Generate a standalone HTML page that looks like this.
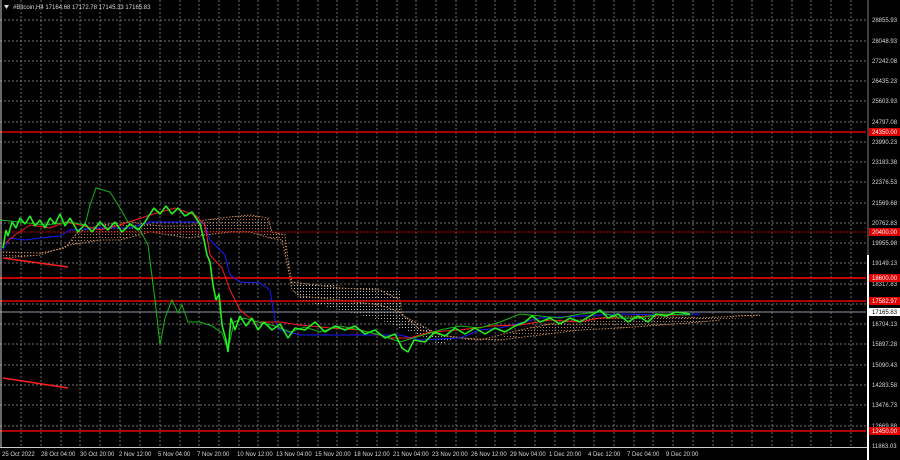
<!DOCTYPE html>
<html><head><meta charset="utf-8"><style>
html,body{margin:0;padding:0;background:#000;width:900px;height:460px;overflow:hidden}
svg{display:block}
text{font-family:"Liberation Sans",sans-serif;font-size:6px;fill:#d8d8d8}
</style></head><body>
<svg width="900" height="460" viewBox="0 0 900 460">
<defs>
<pattern id="wh" width="3" height="3" patternUnits="userSpaceOnUse"><rect width="1" height="1" fill="#bbb"/></pattern>
<pattern id="or" width="3" height="3" patternUnits="userSpaceOnUse"><rect width="1" height="1" fill="#c88a5a"/></pattern>
</defs>
<rect width="900" height="460" fill="#000"/>
<g stroke="#9a9a9a" stroke-width="0.7" stroke-dasharray="2,2">
<line x1="21" y1="0" x2="21" y2="447"/><line x1="41" y1="0" x2="41" y2="447"/><line x1="61" y1="0" x2="61" y2="447"/><line x1="80" y1="0" x2="80" y2="447"/><line x1="100" y1="0" x2="100" y2="447"/><line x1="120" y1="0" x2="120" y2="447"/><line x1="140" y1="0" x2="140" y2="447"/><line x1="160" y1="0" x2="160" y2="447"/><line x1="180" y1="0" x2="180" y2="447"/><line x1="199" y1="0" x2="199" y2="447"/><line x1="219" y1="0" x2="219" y2="447"/><line x1="239" y1="0" x2="239" y2="447"/><line x1="258" y1="0" x2="258" y2="447"/><line x1="278" y1="0" x2="278" y2="447"/><line x1="298" y1="0" x2="298" y2="447"/><line x1="318" y1="0" x2="318" y2="447"/><line x1="337" y1="0" x2="337" y2="447"/><line x1="357" y1="0" x2="357" y2="447"/><line x1="377" y1="0" x2="377" y2="447"/><line x1="397" y1="0" x2="397" y2="447"/><line x1="416" y1="0" x2="416" y2="447"/><line x1="436" y1="0" x2="436" y2="447"/><line x1="456" y1="0" x2="456" y2="447"/><line x1="476" y1="0" x2="476" y2="447"/><line x1="495" y1="0" x2="495" y2="447"/><line x1="515" y1="0" x2="515" y2="447"/><line x1="535" y1="0" x2="535" y2="447"/><line x1="555" y1="0" x2="555" y2="447"/><line x1="574" y1="0" x2="574" y2="447"/><line x1="594" y1="0" x2="594" y2="447"/><line x1="614" y1="0" x2="614" y2="447"/><line x1="634" y1="0" x2="634" y2="447"/><line x1="653" y1="0" x2="653" y2="447"/><line x1="673" y1="0" x2="673" y2="447"/><line x1="693" y1="0" x2="693" y2="447"/><line x1="713" y1="0" x2="713" y2="447"/><line x1="732" y1="0" x2="732" y2="447"/><line x1="752" y1="0" x2="752" y2="447"/><line x1="772" y1="0" x2="772" y2="447"/><line x1="792" y1="0" x2="792" y2="447"/><line x1="811" y1="0" x2="811" y2="447"/><line x1="831" y1="0" x2="831" y2="447"/><line x1="851" y1="0" x2="851" y2="447"/>
<line x1="0" y1="20" x2="866" y2="20"/><line x1="0" y1="41" x2="866" y2="41"/><line x1="0" y1="61" x2="866" y2="61"/><line x1="0" y1="81" x2="866" y2="81"/><line x1="0" y1="101" x2="866" y2="101"/><line x1="0" y1="122" x2="866" y2="122"/><line x1="0" y1="142" x2="866" y2="142"/><line x1="0" y1="162" x2="866" y2="162"/><line x1="0" y1="182" x2="866" y2="182"/><line x1="0" y1="203" x2="866" y2="203"/><line x1="0" y1="223" x2="866" y2="223"/><line x1="0" y1="243" x2="866" y2="243"/><line x1="0" y1="263" x2="866" y2="263"/><line x1="0" y1="284" x2="866" y2="284"/><line x1="0" y1="304" x2="866" y2="304"/><line x1="0" y1="324" x2="866" y2="324"/><line x1="0" y1="344" x2="866" y2="344"/><line x1="0" y1="365" x2="866" y2="365"/><line x1="0" y1="385" x2="866" y2="385"/><line x1="0" y1="405" x2="866" y2="405"/><line x1="0" y1="426" x2="866" y2="426"/>
</g>
<path d="M3,252 L40,253 L65,248 L70,240 L78,232 L100,225 L130,222 L160,226 L190,226 L205,220 L230,217 L250,215 L268,218 L272,232 L285,235 L288,260 L292,282 L300,285 L340,288 L380,290 L400,300 L402,315 L420,325 L440,335 L480,340 L500,338 L520,330 L540,325 L560,322 L580,320 L600,318 L620,316 L660,315 L700,318 L720,317 L740,315 L760,315 L760,317 L720,320 L700,322 L660,325 L620,328 L600,326 L580,330 L560,332 L540,335 L520,336 L500,340 L480,342 L455,338 L440,335 L420,330 L402,318 L400,312 L380,305 L340,300 L300,296 L292,290 L288,268 L282,240 L270,238 L250,232 L230,232 L205,235 L190,238 L150,232 L120,240 L100,240 L70,245 L40,255 L3,258 Z" fill="url(#or)" opacity="0.9"/>
<path d="M290,282 L400,290 L402,315 L420,325 L440,335 L455,338 L440,345 L420,335 L400,328 L380,320 L340,310 L300,300 Z" fill="url(#wh)"/>
<g fill="none" stroke="#c88a5a" stroke-width="1" stroke-dasharray="1.5,1.5">
<path d="M3,252 L40,253 L65,248 L78,232 L100,225 L130,222 L160,226 L190,226 L205,220 L230,217 L250,215 L268,218 L272,232 L285,235 L288,260 L292,282 L340,288 L380,290 L400,300 L402,315 L420,325 L440,335 L480,340 L520,330 L560,322 L620,316 L700,318 L760,315"/>
<path d="M3,258 L40,255 L70,245 L100,240 L120,240 L150,232 L190,238 L205,235 L230,232 L250,232 L270,238 L282,240 L288,268 L292,290 L300,296 L340,300 L380,305 L400,312 L420,330 L455,338 L500,340 L540,335 L580,330 L620,328 L660,325 L700,322 L720,320"/>
</g>
<line x1="0" y1="132" x2="866" y2="132" stroke="#e00000" stroke-width="1.5"/>
<line x1="0" y1="232" x2="866" y2="232" stroke="#c00000" stroke-width="1" stroke-dasharray="2,1"/>
<line x1="0" y1="278" x2="866" y2="278" stroke="#e00000" stroke-width="1.8"/>
<line x1="0" y1="301" x2="866" y2="301" stroke="#e00000" stroke-width="1.5"/>
<line x1="0" y1="312" x2="866" y2="312" stroke="#8e9aa8" stroke-width="1"/>
<line x1="0" y1="431" x2="866" y2="431" stroke="#e00000" stroke-width="1.5"/>
<line x1="3" y1="258" x2="68" y2="267" stroke="#ff2020" stroke-width="1.5"/>
<line x1="3" y1="378" x2="68" y2="388" stroke="#ff2020" stroke-width="1.5"/>
<path d="M3,250 L10,238 L25,240 L40,238 L60,236 L70,230 L100,228 L130,228 L150,222 L200,222 L205,225 L210,240 L225,255 L230,275 L240,282 L260,283 L270,290 L275,320 L280,330 L300,335 L330,335 L360,335 L400,335 L420,340 L460,338 L480,330 L500,328 L540,318 L580,316 L620,314 L660,315 L700,314" fill="none" stroke="#1a1aff" stroke-width="1"/>
<path d="M3,245 L15,235 L30,225 L50,228 L65,222 L80,225 L100,230 L120,225 L150,215 L175,208 L195,215 L205,225 L210,255 L222,268 L230,290 L240,310 L255,322 L280,322 L300,325 L330,328 L360,330 L390,338 L410,338 L430,332 L460,330 L490,326 L520,325 L550,320 L580,322 L600,318 L630,318 L660,315 L690,315" fill="none" stroke="#ff1a1a" stroke-width="1"/>
<path d="M0,220 L20,222 L45,225 L70,222 L85,225 L90,205 L96,188 L110,192 L120,208 L128,222 L140,230 L148,245 L155,300 L160,345 L165,318 L172,300 L178,313 L182,305 L188,322 L200,322 L212,326 L222,333 L228,350 L234,322 L244,318 L258,322 L275,326 L290,332 L305,327 L320,332 L340,326 L360,330 L380,335 L400,342 L420,336 L440,330 L460,326 L480,328 L500,322 L520,314 L540,316 L560,318 L580,314 L600,312 L620,318 L640,318 L660,314 L690,315" fill="none" stroke="#14b814" stroke-width="1"/>
<path d="M3,248 L6,230 L8,236 L12,222 L16,228 L20,218 L25,224 L30,216 L35,226 L40,220 L45,228 L50,218 L55,224 L60,214 L65,226 L70,218 L78,232 L85,224 L92,232 L100,222 L108,230 L115,222 L122,232 L130,224 L138,230 L145,222 L150,214 L154,208 L160,214 L166,206 L172,214 L178,208 L185,216 L192,212 L200,224 L204,240 L207,255 L210,262 L213,285 L216,300 L219,294 L222,325 L226,340 L228,352 L231,318 L235,330 L240,316 L246,326 L252,318 L258,330 L264,322 L272,330 L280,324 L288,338 L295,328 L305,330 L315,322 L325,332 L335,326 L345,330 L355,326 L365,334 L375,330 L385,338 L395,334 L402,348 L408,352 L414,340 L425,342 L435,332 L445,336 L455,328 L465,334 L475,328 L485,334 L495,328 L505,332 L515,326 L525,322 L532,316 L540,322 L550,318 L560,324 L570,318 L580,322 L590,316 L600,310 L608,318 L618,314 L628,322 L638,316 L648,322 L656,314 L666,316 L676,312 L690,314" fill="none" stroke="#22ee22" stroke-width="1.6" stroke-linejoin="bevel"/>
<line x1="1" y1="0" x2="1" y2="447" stroke="#ccc" stroke-width="1"/>
<line x1="0" y1="447.5" x2="868" y2="447.5" stroke="#ccc" stroke-width="1"/>
<line x1="868" y1="0" x2="868" y2="255" stroke="#777" stroke-width="1"/>
<line x1="868" y1="255" x2="868" y2="460" stroke="#fff" stroke-width="2"/>
<path d="M4,5 L9,5 L6.5,9 Z" fill="#ddd"/>
<text x="13" y="9">#Bitcoin,H4  17164.68 17172.78 17145.33 17165.83</text>
<g>
<text x="872" y="22">28855.93</text><text x="872" y="43">28048.93</text><text x="872" y="63">27242.08</text><text x="872" y="83">26435.23</text><text x="872" y="103">25603.93</text><text x="872" y="124">24797.08</text><text x="872" y="144">23990.23</text><text x="872" y="164">23183.38</text><text x="872" y="184">22376.53</text><text x="872" y="205">21569.68</text><text x="872" y="225">20762.83</text><text x="872" y="245">19955.98</text><text x="872" y="265">19149.13</text><text x="872" y="286">18317.83</text><text x="872" y="326">16704.13</text><text x="872" y="346">15897.28</text><text x="872" y="367">15090.43</text><text x="872" y="387">14283.58</text><text x="872" y="407">13476.73</text><text x="872" y="428">12669.88</text><text x="872" y="448">11863.03</text>
</g>
<rect x="869" y="128" width="31" height="8" fill="#e00000"/><text x="872" y="134" style="fill:#fff">24350.00</text>
<rect x="869" y="228" width="31" height="8" fill="#e00000"/><text x="872" y="234" style="fill:#fff">20400.00</text>
<rect x="869" y="274" width="31" height="8" fill="#e00000"/><text x="872" y="280" style="fill:#fff">18600.00</text>
<rect x="869" y="297" width="31" height="8" fill="#e00000"/><text x="872" y="303" style="fill:#fff">17582.97</text>
<rect x="869" y="308" width="31" height="8" fill="#fff"/><text x="872" y="314" style="fill:#000">17165.83</text>
<rect x="869" y="427" width="31" height="8" fill="#e00000"/><text x="872" y="433" style="fill:#fff">12450.00</text>
<g>
<text x="2" y="456">25 Oct 2022</text><text x="41" y="456">28 Oct 04:00</text><text x="80" y="456">30 Oct 20:00</text><text x="119" y="456">2 Nov 12:00</text><text x="158" y="456">5 Nov 04:00</text><text x="197" y="456">7 Nov 20:00</text><text x="237" y="456">10 Nov 12:00</text><text x="276" y="456">13 Nov 04:00</text><text x="315" y="456">15 Nov 20:00</text><text x="354" y="456">18 Nov 12:00</text><text x="393" y="456">21 Nov 04:00</text><text x="432" y="456">23 Nov 20:00</text><text x="471" y="456">26 Nov 12:00</text><text x="510" y="456">29 Nov 04:00</text><text x="549" y="456">1 Dec 20:00</text><text x="588" y="456">4 Dec 12:00</text><text x="627" y="456">7 Dec 04:00</text><text x="666" y="456">9 Dec 20:00</text>
</g>
</svg>
</body></html>
